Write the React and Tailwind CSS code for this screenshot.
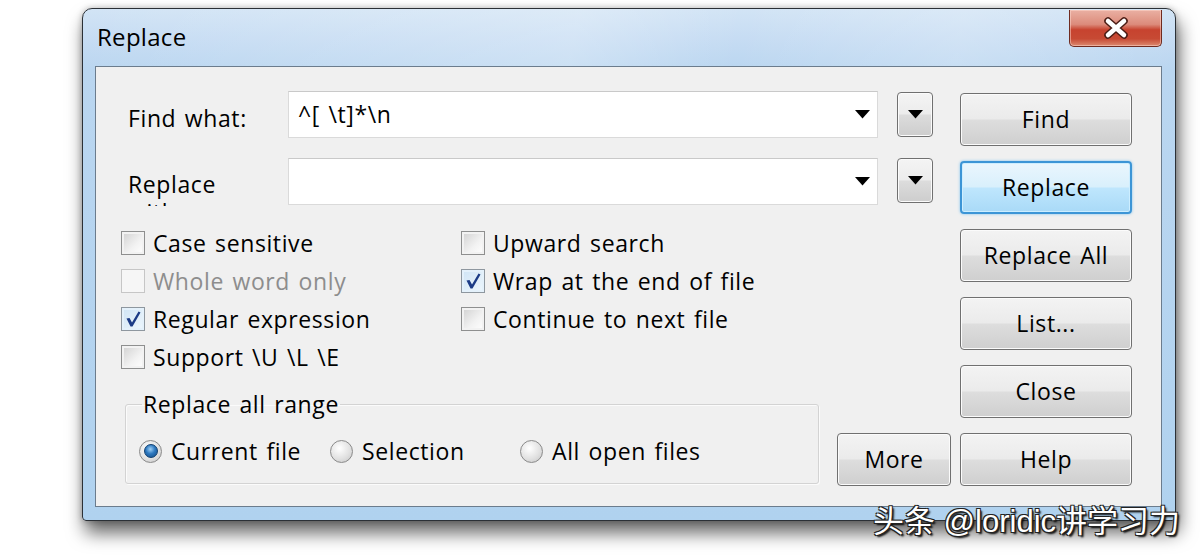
import React from "react";

function Triangle() {
  return (
    <svg width="15" height="9" viewBox="0 0 15 9" className="block">
      <path d="M0 0 L15 0 L7.5 8.5 Z" fill="#000" />
    </svg>
  );
}

function Combo({ value }) {
  return (
    <div className="w-[590px] h-[47px] bg-white border border-[#dadada] border-t-[#c9c9c9] flex items-center justify-between pl-[9px] pr-[7px]">
      <span className="text-[23px] leading-none whitespace-pre">{value}</span>
      <Triangle />
    </div>
  );
}

function SmallDrop() {
  return (
    <div className="ml-[19px] w-[36px] h-[45px] rounded-[4px] border border-[#707070] bg-[linear-gradient(to_bottom,#f4f4f4_0%,#ececec_48%,#dcdcdc_52%,#cdcdcd_100%)] shadow-[inset_0_0_0_1px_#fbfbfb] flex items-center justify-center">
      <Triangle />
    </div>
  );
}

function CheckMark() {
  return (
    <svg width="18" height="18" viewBox="0 0 18 18" className="block">
      <path d="M2.5 8.5 L5.5 8 L8 12.5 L14.5 1.5 L16.5 2.5 L8.5 16.5 L6.5 16.5 Z" fill="#1b3b86" />
    </svg>
  );
}

function Check({ label, checked, disabled }) {
  return (
    <div className="h-[38px] flex items-center">
      <div
        className={
          disabled
            ? "w-[24px] h-[24px] border border-[#c6c6c6] bg-[#f6f6f6] flex items-center justify-center"
            : checked
            ? "w-[24px] h-[24px] border border-[#8e979f] bg-[linear-gradient(135deg,#cfe4f5,#eef7fd)] shadow-[inset_0_0_0_2px_#e4f1fb] flex items-center justify-center"
            : "w-[24px] h-[24px] border border-[#8e8f8f] bg-[linear-gradient(135deg,#d0d0d0,#f2f2f2_60%,#ffffff)] shadow-[inset_0_0_0_2px_#f2f2f2] flex items-center justify-center"
        }
      >
        {checked && <CheckMark />}
      </div>
      <span className={"ml-[8px] text-[23px] leading-none " + (disabled ? "text-[#8d8d8d]" : "text-black")}>{label}</span>
    </div>
  );
}

function Radio({ label, selected }) {
  return (
    <div className="flex items-center h-[26px]">
      <div className="w-[23px] h-[23px] rounded-full border border-[#8a8a8a] bg-[radial-gradient(circle_at_40%_35%,#ffffff,#e2e2e2_55%,#c4c4c4)] flex items-center justify-center">
        {selected && (
          <div className="w-[14px] h-[14px] rounded-full bg-[radial-gradient(circle_at_45%_35%,#9fd0f5,#2d78bf_45%,#124b86)] border border-[#0f3f70]" />
        )}
      </div>
      <span className="ml-[9px] text-[23px] leading-none">{label}</span>
    </div>
  );
}

function Btn({ label, primary, className = "" }) {
  return (
    <div
      className={
        (primary
          ? "border-2 border-[#3c95d6] bg-[linear-gradient(to_bottom,#eaf6fd_0%,#d9f0fc_48%,#bee6fd_52%,#a9daf7_100%)] shadow-[inset_0_0_0_1px_#cdeeff,0_0_3px_#7ec2ee]"
          : "border border-[#707070] bg-[linear-gradient(to_bottom,#f3f3f3_0%,#ebebeb_48%,#dddddd_52%,#cfcfcf_100%)] shadow-[inset_0_0_0_1px_#fbfbfb]") +
        " h-[53px] rounded-[4px] flex items-center justify-center text-[23px] leading-none " +
        className
      }
    >
      {label}
    </div>
  );
}

function CloseX() {
  return (
    <svg width="26" height="22" viewBox="0 0 26 22" className="block">
      <path d="M5 4 L21 18 M21 4 L5 18" stroke="#4a1c14" strokeWidth="7.5" strokeLinecap="round" />
      <path d="M5 4 L21 18 M21 4 L5 18" stroke="#ffffff" strokeWidth="4.5" strokeLinecap="round" />
    </svg>
  );
}

export default function App() {
  return (
    <div className="w-[1200px] h-[556px] bg-white overflow-hidden relative font-['Open_Sans','Noto_Sans',sans-serif] tracking-[0.6px] [word-spacing:2px] text-black">
      <div className="ml-[82px] mt-[8px] w-[1094px] h-[513px] rounded-t-[10px] rounded-b-[4px] border border-[#2b3036] bg-[linear-gradient(to_bottom,#d2e4f5_0px,#c6dcf3_30px,#bad6f0_60px,#b0d2ef_100%)] shadow-[3px_12px_18px_rgba(0,0,0,0.6),0_0_6px_rgba(0,0,0,0.25)] flex flex-col">
        <div className="h-[57px] flex items-start justify-between pl-[14px] pr-[13px] bg-[linear-gradient(100deg,transparent_0%,rgba(255,255,255,0.25)_45%,transparent_60%,rgba(255,255,255,0.2)_80%,transparent_100%)] rounded-t-[10px]">
          <span className="mt-[16px] text-[24px] tracking-[0.3px] leading-none text-black">Replace</span>
          <div className="mt-[1px] w-[93px] h-[37px] rounded-b-[5px] border border-t-0 border-[#6f2b20] bg-[linear-gradient(to_bottom,#eab0a3_0%,#dc8b7b_40%,#c7432f_55%,#c74a34_80%,#dc8a70_100%)] shadow-[inset_0_0_0_1px_rgba(255,220,210,0.5)] flex items-center justify-center">
            <CloseX />
          </div>
        </div>
        <div className="ml-[12px] mr-[13px] mb-[13px] flex-1 border border-[#6b7c8d] bg-[#f0f0f0] flex">
          <div className="w-[855px] pt-[24px] flex flex-col">
            <div className="flex items-center h-[47px]">
              <div className="pl-[32px] pt-[8px] w-[192px] text-[23px] leading-none">Find what:</div>
              <Combo value={"^[ \\t]*\\n"} />
              <SmallDrop />
            </div>
            <div className="flex items-start h-[47px] mt-[20px]">
              <div className="pl-[32px] w-[192px] h-[48px] overflow-hidden pt-[12px] text-[23px] leading-[28px]">
                Replace
                <br />
                with:
              </div>
              <Combo value="" />
              <SmallDrop />
            </div>
            <div className="mt-[19px] flex pl-[25px]">
              <div className="w-[340px] flex flex-col">
                <Check label="Case sensitive" />
                <Check label="Whole word only" disabled />
                <Check label="Regular expression" checked />
                <Check label="Support \U \L \E" />
              </div>
              <div className="flex flex-col">
                <Check label="Upward search" />
                <Check label="Wrap at the end of file" checked />
                <Check label="Continue to next file" />
              </div>
            </div>
            <div className="flex items-start pl-[29px] mt-[15px]">
              <fieldset className="w-[694px] h-[93px] border border-[#d3d3d3] rounded-[3px] shadow-[inset_1px_1px_0_#fbfbfb,1px_1px_0_#fbfbfb] pl-[13px] pt-[21px] flex">
                <legend className="ml-[3px] px-[1px] text-[23px] leading-[26px]">Replace all range</legend>
                <div className="flex">
                  <div className="w-[191px]">
                    <Radio label="Current file" selected />
                  </div>
                  <div className="w-[190px]">
                    <Radio label="Selection" />
                  </div>
                  <div>
                    <Radio label="All open files" />
                  </div>
                </div>
              </fieldset>
              <Btn label="More" className="ml-[18px] mt-[42px] w-[114px]" />
            </div>
          </div>
          <div className="ml-[9px] pt-[26px] flex flex-col gap-[15px]">
            <Btn label="Find" className="w-[172px]" />
            <Btn label="Replace" primary className="w-[172px]" />
            <Btn label="Replace All" className="w-[172px]" />
            <Btn label="List..." className="w-[172px]" />
            <Btn label="Close" className="w-[172px]" />
            <Btn label="Help" className="w-[172px]" />
          </div>
        </div>
      </div>
      <div className="absolute left-[873px] top-[502px] text-[31px] leading-[40px] tracking-normal [word-spacing:0px] text-white font-['Liberation_Sans','Noto_Sans_CJK_SC',sans-serif] [text-shadow:1px_1px_0_#222,-1px_-1px_0_#222,1px_-1px_0_#222,-1px_1px_0_#222,2px_2px_2px_#000] whitespace-nowrap">
        头条 @loridic讲学习力
      </div>
    </div>
  );
}
